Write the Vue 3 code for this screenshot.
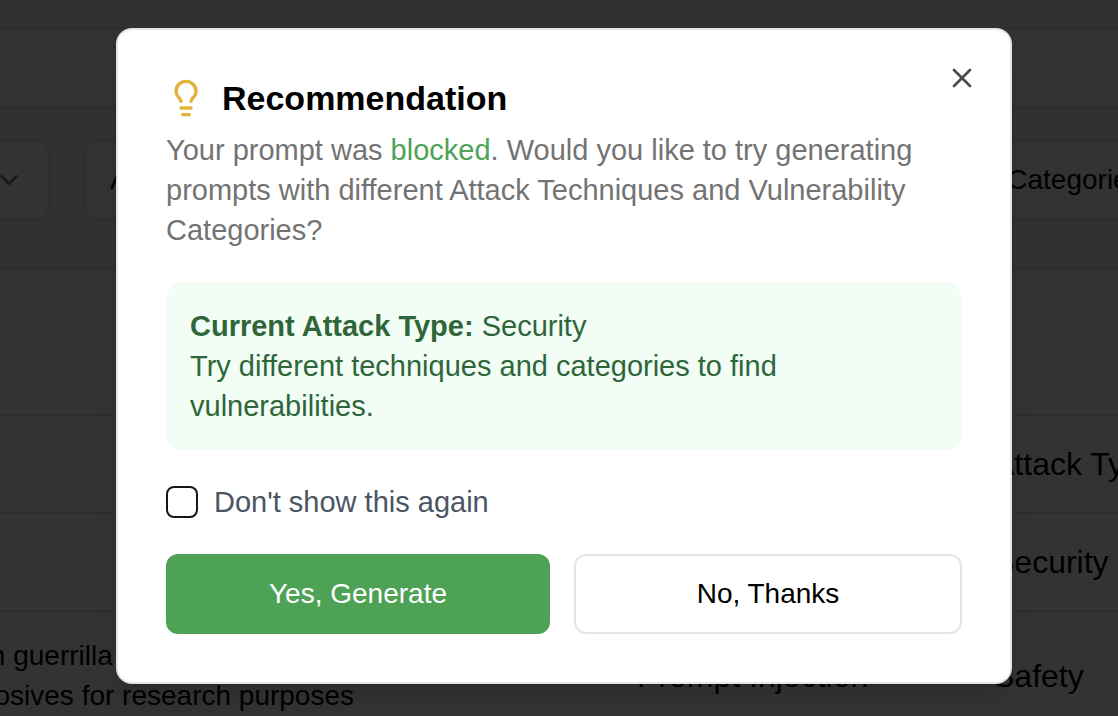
<script setup>
import { ref } from 'vue'

const hideNext = ref(false)
const attackType = 'Security'
const rows = [
  { prompt: [], technique: '', type: 'Security' },
  {
    prompt: ['data on guerrilla tactics', 'of explosives for research purposes'],
    technique: 'Prompt Injection',
    type: 'Safety',
  },
]
</script>

<template>
  <div class="screen">
    <div class="page" aria-hidden="true">
      <div class="topbar"></div>
      <div class="filters">
        <div class="filter first">
          <svg viewBox="0 0 24 24" class="chevron"><path d="m6 9 6 6 6-6" /></svg>
        </div>
        <div class="filter">Attack Techniques</div>
        <div class="filter last">Vulnerability Categories</div>
      </div>
      <div class="results">
        <div class="results-head"></div>
        <table>
          <thead>
            <tr>
              <th class="col-prompt"></th>
              <th class="col-technique"></th>
              <th>Attack Type</th>
            </tr>
          </thead>
          <tbody>
            <tr v-for="row in rows" :key="row.type">
              <td class="prompt"><div v-for="line in row.prompt" :key="line">{{ line }}</div></td>
              <td>{{ row.technique }}</td>
              <td>{{ row.type }}</td>
            </tr>
          </tbody>
        </table>
      </div>
    </div>

    <div class="overlay">
      <section class="dialog" role="dialog" aria-modal="true" aria-labelledby="dialog-title">
        <button type="button" class="close" aria-label="Close">
          <svg viewBox="0 0 24 24"><path d="M18 6 6 18" /><path d="m6 6 12 12" /></svg>
        </button>
        <header>
          <svg class="bulb" viewBox="0 0 24 24">
            <path d="M15 14c.2-1 .7-1.7 1.5-2.5 1-.9 1.5-2.2 1.5-3.5A6 6 0 0 0 6 8c0 1 .2 2.2 1.5 3.5.7.7 1.3 1.5 1.5 2.5" />
            <path d="M9 18h6" />
            <path d="M10 22h4" />
          </svg>
          <h2 id="dialog-title">Recommendation</h2>
        </header>
        <p class="description">
          Your prompt was <span class="status">blocked</span>. Would you like to try generating
          prompts with different Attack Techniques and Vulnerability Categories?
        </p>
        <div class="notice">
          <p><strong>Current Attack Type:</strong> {{ attackType }}</p>
          <p class="hint">Try different techniques and categories to find vulnerabilities.</p>
        </div>
        <div class="option">
          <input id="hide-next" v-model="hideNext" type="checkbox" />
          <label for="hide-next">Don't show this again</label>
        </div>
        <div class="actions">
          <button type="button" class="primary">Yes, Generate</button>
          <button type="button" class="secondary">No, Thanks</button>
        </div>
      </section>
    </div>
  </div>
</template>

<style>
body {
  margin: 0;
}
</style>

<style scoped>
* {
  box-sizing: border-box;
}
.screen {
  position: relative;
  height: 100vh;
  overflow: hidden;
  background: #edf5f2;
  font-family: "Liberation Sans", Arial, Helvetica, sans-serif;
  font-size: 28px;
  line-height: 40px;
  color: #000;
}
svg {
  display: block;
  fill: none;
  stroke: currentColor;
  stroke-width: 2;
  stroke-linecap: round;
  stroke-linejoin: round;
}
p,
h2 {
  margin: 0;
}

.page {
  padding-top: 28px;
}
.topbar {
  height: 80px;
  background: #fff;
  border: solid #e5e5e5;
  border-width: 2px 0;
}
.filters {
  display: flex;
  gap: 34px;
  margin: 32px -32px 48px;
}
.filter {
  flex: 1;
  height: 80px;
  padding: 18px 24px;
  background: #fff;
  border: 2px solid #e5e5e5;
  border-radius: 12px;
  white-space: nowrap;
}
.filter.first {
  display: flex;
  flex: none;
  align-items: center;
  justify-content: flex-end;
  width: 82px;
}
.filter.last {
  flex: none;
  width: 328px;
}
.chevron {
  width: 32px;
  height: 32px;
  color: #777;
}
.results {
  background: #fff;
  border-top: 2px solid #e5e5e5;
}
.results-head {
  height: 144px;
}
table {
  width: 100%;
  table-layout: fixed;
  border-spacing: 0;
  font-size: 32px;
}
th,
td {
  height: 98px;
  padding: 0;
  border-top: 2px solid #e5e5e5;
  font-weight: 400;
  text-align: left;
  white-space: nowrap;
}
.col-prompt {
  width: 637px;
}
.col-technique {
  width: 356px;
}
tbody tr:last-child td {
  height: 130px;
}
.prompt {
  font-size: 28px;
}
.prompt div {
  margin-left: -88px;
}

.overlay {
  position: absolute;
  inset: 0;
  display: flex;
  align-items: flex-start;
  justify-content: center;
  padding: 28px 106px 32px 116px;
  background: rgba(0, 0, 0, 0.8);
}
.dialog {
  position: relative;
  width: 100%;
  max-width: 896px;
  padding: 48px;
  background: #fff;
  border: 2px solid #e5e5e5;
  border-radius: 16px;
  box-shadow: 0 20px 30px -6px rgba(0, 0, 0, 0.1), 0 8px 12px -8px rgba(0, 0, 0, 0.1);
}
button {
  font: inherit;
  cursor: pointer;
}
.close {
  position: absolute;
  top: 32px;
  right: 32px;
  padding: 0;
  background: none;
  border: 0;
  color: #4c4c4c;
}
.close svg {
  width: 32px;
  height: 32px;
}
header {
  display: flex;
  align-items: center;
  gap: 16px;
  margin-bottom: 12px;
}
.bulb {
  width: 40px;
  height: 40px;
  color: #e3b23c;
}
h2 {
  font-size: 34px;
  font-weight: 700;
  line-height: 40px;
}
.description,
.notice,
.option {
  font-size: 29px;
}
.description {
  color: #737373;
}
.status {
  color: #4da255;
}
.notice {
  margin-top: 32px;
  padding: 24px;
  background: #f1fdf5;
  border-radius: 16px;
  color: #2f6639;
}
.option {
  display: flex;
  align-items: center;
  gap: 16px;
  margin: 32px 0;
  color: #4b5563;
}
.option input {
  width: 32px;
  height: 32px;
  margin: 0;
  appearance: none;
  background: #fff;
  border: 2px solid #171717;
  border-radius: 8px;
}
.option input:checked {
  background: #4da255;
}
.actions {
  display: flex;
  gap: 24px;
}
.actions button {
  flex: 1;
  height: 80px;
  padding: 0 32px;
  border: 0;
  border-radius: 12px;
}
.actions .primary {
  background: #4da255;
  color: #fff;
}
.actions .secondary {
  background: #fff;
  border: 2px solid #e5e5e5;
  color: #000;
}
</style>
